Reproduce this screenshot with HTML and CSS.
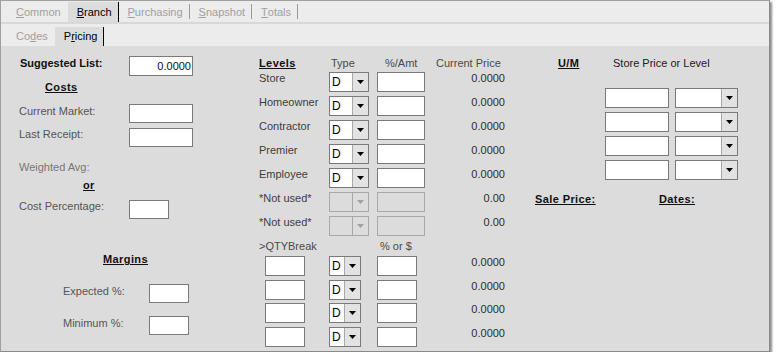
FILE: index.html
```html
<!DOCTYPE html>
<html>
<head>
<meta charset="utf-8">
<link rel="stylesheet" href="styles.css">
</head>
<body>
<div class="window">
  <div class="tabs tabs-top">
    <div class="tab no-sep"><u>C</u>ommon</div>
    <div class="tab active"><u>B</u>ranch</div>
    <div class="tab"><u>P</u>urchasing</div>
    <div class="tab"><u>S</u>napshot</div>
    <div class="tab"><u>T</u>otals</div>
  </div>
  <div class="tabs tabs-sub">
    <div class="tab no-sep">Co<u>d</u>es</div>
    <div class="tab active">P<u>r</u>icing</div>
  </div>
  <div class="content">
    <div class="col-left">
      <div class="frow r-sugg"><span class="lbl bold">Suggested List:</span><span class="inp w64 h20 num">0.0000</span></div>
      <div class="heading h-costs">Costs</div>
      <div class="frow r-market"><span class="lbl grey">Current Market:</span><span class="inp w64"></span></div>
      <div class="frow r-receipt"><span class="lbl grey">Last Receipt:</span><span class="inp w64"></span></div>
      <div class="weighted">Weighted Avg:</div>
      <div class="heading h-or">or</div>
      <div class="frow r-pct"><span class="lbl grey">Cost Percentage:</span><span class="inp w40"></span></div>
      <div class="heading h-margins">Margins</div>
      <div class="frow r-expected"><span class="lbl grey mlbl">Expected %:</span><span class="inp w40"></span></div>
      <div class="frow r-minimum"><span class="lbl grey mlbl">Minimum %:</span><span class="inp w40"></span></div>
    </div>

    <div class="col-mid">
      <div class="mhead">
        <span class="heading hc-levels">Levels</span>
        <span class="hc-type">Type</span>
        <span class="hc-amt">%/Amt</span>
        <span class="hc-price">Current Price</span>
      </div>
      <div class="levels">
        <div class="lrow"><span class="llbl">Store</span><div class="combo w40"><span class="val">D</span><span class="btn"><svg width="7" height="4" viewBox="0 0 7 4"><path d="M0 0h7L3.5 4z"/></svg></span></div><span class="inp h20 w48 amt"></span><span class="price">0.0000</span></div>
        <div class="lrow"><span class="llbl">Homeowner</span><div class="combo w40"><span class="val">D</span><span class="btn"><svg width="7" height="4" viewBox="0 0 7 4"><path d="M0 0h7L3.5 4z"/></svg></span></div><span class="inp h20 w48 amt"></span><span class="price">0.0000</span></div>
        <div class="lrow"><span class="llbl">Contractor</span><div class="combo w40"><span class="val">D</span><span class="btn"><svg width="7" height="4" viewBox="0 0 7 4"><path d="M0 0h7L3.5 4z"/></svg></span></div><span class="inp h20 w48 amt"></span><span class="price">0.0000</span></div>
        <div class="lrow"><span class="llbl">Premier</span><div class="combo w40"><span class="val">D</span><span class="btn"><svg width="7" height="4" viewBox="0 0 7 4"><path d="M0 0h7L3.5 4z"/></svg></span></div><span class="inp h20 w48 amt"></span><span class="price">0.0000</span></div>
        <div class="lrow"><span class="llbl">Employee</span><div class="combo w40"><span class="val">D</span><span class="btn"><svg width="7" height="4" viewBox="0 0 7 4"><path d="M0 0h7L3.5 4z"/></svg></span></div><span class="inp h20 w48 amt"></span><span class="price">0.0000</span></div>
        <div class="lrow"><span class="llbl">*Not used*</span><div class="combo w40 dis"><span class="val"></span><span class="btn"><svg width="7" height="4" viewBox="0 0 7 4"><path d="M0 0h7L3.5 4z"/></svg></span></div><span class="inp h20 w48 amt dis"></span><span class="price">0.00</span></div>
        <div class="lrow"><span class="llbl">*Not used*</span><div class="combo w40 dis"><span class="val"></span><span class="btn"><svg width="7" height="4" viewBox="0 0 7 4"><path d="M0 0h7L3.5 4z"/></svg></span></div><span class="inp h20 w48 amt dis"></span><span class="price">0.00</span></div>
      </div>
      <div class="qhead"><span class="hq-qty">&gt;QTYBreak</span><span class="hq-pct">% or $</span></div>
      <div class="qtys">
        <div class="qrow"><span class="inp h20 w40"></span><div class="combo w32 qcombo"><span class="val">D</span><span class="btn"><svg width="7" height="4" viewBox="0 0 7 4"><path d="M0 0h7L3.5 4z"/></svg></span></div><span class="inp h20 w40 qamt"></span><span class="price qprice">0.0000</span></div>
        <div class="qrow"><span class="inp h20 w40"></span><div class="combo w32 qcombo"><span class="val">D</span><span class="btn"><svg width="7" height="4" viewBox="0 0 7 4"><path d="M0 0h7L3.5 4z"/></svg></span></div><span class="inp h20 w40 qamt"></span><span class="price qprice">0.0000</span></div>
        <div class="qrow"><span class="inp h20 w40"></span><div class="combo w32 qcombo"><span class="val">D</span><span class="btn"><svg width="7" height="4" viewBox="0 0 7 4"><path d="M0 0h7L3.5 4z"/></svg></span></div><span class="inp h20 w40 qamt"></span><span class="price qprice">0.0000</span></div>
        <div class="qrow"><span class="inp h20 w40"></span><div class="combo w32 qcombo"><span class="val">D</span><span class="btn"><svg width="7" height="4" viewBox="0 0 7 4"><path d="M0 0h7L3.5 4z"/></svg></span></div><span class="inp h20 w40 qamt"></span><span class="price qprice">0.0000</span></div>
      </div>
    </div>

    <div class="col-right">
      <div class="rhead"><span class="heading hc-um">U/M</span><span class="hc-store">Store Price or Level</span></div>
      <div class="umrows">
        <div class="umrow"><span class="inp h20 w64"></span><div class="combo w63 umcombo"><span class="val"></span><span class="btn"><svg width="7" height="4" viewBox="0 0 7 4"><path d="M0 0h7L3.5 4z"/></svg></span></div></div>
        <div class="umrow"><span class="inp h20 w64"></span><div class="combo w63 umcombo"><span class="val"></span><span class="btn"><svg width="7" height="4" viewBox="0 0 7 4"><path d="M0 0h7L3.5 4z"/></svg></span></div></div>
        <div class="umrow"><span class="inp h20 w64"></span><div class="combo w63 umcombo"><span class="val"></span><span class="btn"><svg width="7" height="4" viewBox="0 0 7 4"><path d="M0 0h7L3.5 4z"/></svg></span></div></div>
        <div class="umrow"><span class="inp h20 w64"></span><div class="combo w63 umcombo"><span class="val"></span><span class="btn"><svg width="7" height="4" viewBox="0 0 7 4"><path d="M0 0h7L3.5 4z"/></svg></span></div></div>
      </div>
      <div class="salerow"><span class="heading hc-sale">Sale Price:</span><span class="heading">Dates:</span></div>
    </div>
  </div>
</div>
</body>
</html>
```

FILE: styles.css
```css
* { box-sizing: border-box; }

body {
  margin: 0;
  background: #ffffff;
  font-family: "Liberation Sans", Arial, sans-serif;
  font-size: 11px;
  line-height: 13px;
  color: #333;
}

.window {
  width: 770px;
  height: 352px;
  border: 1px solid #a0a0a0;
  border-right-color: #8a8a8a;
  border-bottom-color: #8a8a8a;
  background: #dcdcdc;
  box-shadow: 2px 2px 2px rgba(0, 0, 0, 0.45);
  display: flex;
  flex-direction: column;
}

/* ---------- tabs ---------- */
.tabs {
  display: flex;
  background: #ececec;
  flex: none;
}

.tabs-top {
  height: 23px;
  padding: 1px 0 0 6px;
  border-bottom: 2px solid #d8d8d8;
}

.tabs-sub {
  height: 22px;
  padding: 3px 0 0 6px;
}

.tab {
  position: relative;
  display: flex;
  align-items: center;
  padding: 0 7px 0 9px;
  color: #a0a0a0;
}

.tab::after {
  content: "";
  position: absolute;
  right: 0;
  top: 2px;
  width: 1px;
  height: 15px;
  background: #9c9c9c;
}

.tab.no-sep::after,
.tab.active::after { display: none; }

.tab.active {
  background: #dcdcdc;
  color: #000;
  padding-right: 6px;
  border-right: 1px solid #000;
}

.tabs-sub .tab.active { padding-bottom: 1px; }

/* ---------- content ---------- */
.content {
  flex: 1;
  display: grid;
  grid-template-columns: 249px 270px 1fr;
}

.heading {
  font-weight: bold;
  text-decoration: underline;
  color: #111;
  letter-spacing: 0.4px;
}

.bold {
  font-weight: bold;
  color: #111;
}

.grey { color: #555; }

.inp {
  display: block;
  background: #fff;
  border: 1px solid #7a7a7a;
  height: 19px;
  flex: none;
}

.inp.h20 { height: 20px; }
.inp.num {
  text-align: right;
  padding-right: 1px;
  line-height: 18px;
  color: #111;
}
.inp.dis {
  background: #dcdcdc;
  border-color: #a8a8a8;
}

.w32 { width: 32px; }
.w40 { width: 40px; }
.w48 { width: 48px; }
.w63 { width: 63px; }
.w64 { width: 64px; }

.combo {
  display: flex;
  height: 20px;
  flex: none;
  border: 1px solid #7a7a7a;
  background: #fff;
}

.combo .val {
  flex: 1;
  padding-left: 2px;
  line-height: 18px;
  color: #000;
  font-size: 12px;
}

.combo .btn {
  width: 16px;
  border-left: 1px solid #a8a8a8;
  background: #e2e2e2;
  display: flex;
  align-items: center;
  justify-content: center;
  color: #000;
}

.combo .btn svg { fill: currentColor; display: block; }

.combo.dis {
  background: #dcdcdc;
  border-color: #a8a8a8;
}
.combo.dis .btn {
  background: #dcdcdc;
  color: #a0a0a0;
}

/* ---------- left column ---------- */
.col-left {
  padding: 10px 0 0 18px;
  display: flex;
  flex-direction: column;
  align-items: flex-start;
}

.frow {
  display: flex;
  align-items: flex-start;
}

.frow .lbl { width: 110px; padding-top: 1px; }
.r-sugg .lbl { padding-left: 1px; }

.h-costs { margin: 5px 0 0 26px; }
.r-market { margin-top: 10px; }
.r-receipt { margin-top: 5px; }
.r-receipt .lbl { padding-top: 0; }
.weighted { margin-top: 14px; color: #777; }
.h-or { margin: 5px 0 0 64px; }
.r-pct { margin-top: 8px; }
.r-pct .lbl { padding-top: 0; }
.h-margins { margin: 34px 0 0 84px; }
.frow .mlbl { width: 130px; padding-left: 44px; }
.r-expected { margin-top: 18px; }
.r-minimum { margin-top: 13px; }

/* ---------- middle column ---------- */
.col-mid {
  padding: 11px 0 0 9px;
  display: flex;
  flex-direction: column;
}

.mhead, .qhead, .rhead {
  display: flex;
  height: 13px;
  color: #4a4a4a;
}

.hc-levels { width: 72px; }
.hc-type { width: 54px; }
.hc-amt { width: 51px; }

.levels {
  margin-top: 2px;
  display: flex;
  flex-direction: column;
  gap: 4px;
}

.lrow, .qrow {
  display: flex;
  height: 20px;
  align-items: flex-start;
}

.llbl { width: 70px; color: #3c3c3c; }
.amt { margin-left: 8px; }

.price {
  width: 80px;
  text-align: right;
  color: #2c2c2c;
}

.qhead { margin-top: 4px; }
.hq-qty { width: 121px; }

.qtys {
  margin-top: 3px;
  display: flex;
  flex-direction: column;
  gap: 3.5px;
}

.qrow { padding-left: 6px; }
.qcombo { margin-left: 24px; }
.qamt { margin-left: 16px; }
.qprice { width: 88px; }

/* ---------- right column ---------- */
.col-right {
  padding-top: 11px;
  display: flex;
  flex-direction: column;
}

.hc-um { margin-left: 38px; width: 55px; }
.hc-store { color: #202020; }

.umrows {
  margin-top: 18px;
  padding-left: 85px;
  display: flex;
  flex-direction: column;
  gap: 4px;
}

.umrow { display: flex; }
.umcombo { margin-left: 6px; }

.salerow {
  margin-top: 13px;
  display: flex;
}

.hc-sale { margin-left: 15px; width: 124px; }
```
